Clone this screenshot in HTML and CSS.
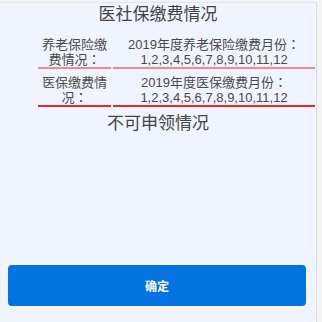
FILE: index.html
```html
<!DOCTYPE html>
<html>
<head>
	<meta charset="utf-8">
	<title>医社保缴费情况</title>
	<link rel="stylesheet" href="styles.css">
</head>
<body>
	<div class="page">
		<h1 class="title">医社保缴费情况</h1>

		<div class="table">
			<div class="row row-light">
				<div class="label">养老保险缴费情况：</div>
				<div class="value">2019年度养老保险缴费月份<span class="colon">：</span><br>1,2,3,4,5,6,7,8,9,10,11,12</div>
			</div>
			<div class="row">
				<div class="label">医保缴费情况：</div>
				<div class="value">2019年度医保缴费月份<span class="colon">：</span><br>1,2,3,4,5,6,7,8,9,10,11,12</div>
			</div>
		</div>

		<h2 class="subtitle">不可申领情况</h2>

		<button class="confirm">确定</button>
	</div>
</body>
</html>
```

FILE: styles.css
```css
* {
	margin: 0;
	padding: 0;
	box-sizing: border-box;
	font-family: "Liberation Sans", "Noto Sans CJK SC", sans-serif;
}

body {
	background: #f4f4f4;
	overflow: hidden;
}

.page {
	margin-top: 2px;
	width: 317px;
	height: 320px;
	background: #f0f4fe;
	border-top: 1px solid #e2e4e8;
	border-right: 1px solid #dcdde0;
	display: flex;
	flex-direction: column;
}

.title {
	font-size: 17px;
	font-weight: normal;
	line-height: 24px;
	text-align: center;
	color: #444;
}

.table {
	margin: 6px 0 0 38px;
	width: 277px;
}

.row {
	display: flex;
	gap: 2px;
	margin-bottom: 2px;
}

.label,
.value {
	padding-top: 3px;
	font-size: 13px;
	line-height: 15px;
	text-align: center;
	color: #4a4a4a;
	border-bottom: 2px solid #f5222d;
}

.row-light .label,
.row-light .value {
	border-bottom-color: #f28a8f;
}

/* centred full-width colon */
.colon {
	display: inline-block;
	height: 15px;
	line-height: 15px;
	font-family: "Noto Sans CJK TC", sans-serif;
}

.label {
	width: 73px;
	padding-left: 4px;
	padding-right: 4px;
	font-family: "Noto Sans CJK TC", sans-serif;
}

.value {
	flex: 1;
}

.subtitle {
	margin-top: 3px;
	font-size: 17px;
	font-weight: normal;
	line-height: 24px;
	text-align: center;
	color: #444;
}

.confirm {
	margin: auto 10px 16px 8px;
	height: 41px;
	border: none;
	border-radius: 4px;
	background: #0273e0;
	color: #fff;
	font-size: 12px;
	font-weight: bold;
	cursor: pointer;
}
```
